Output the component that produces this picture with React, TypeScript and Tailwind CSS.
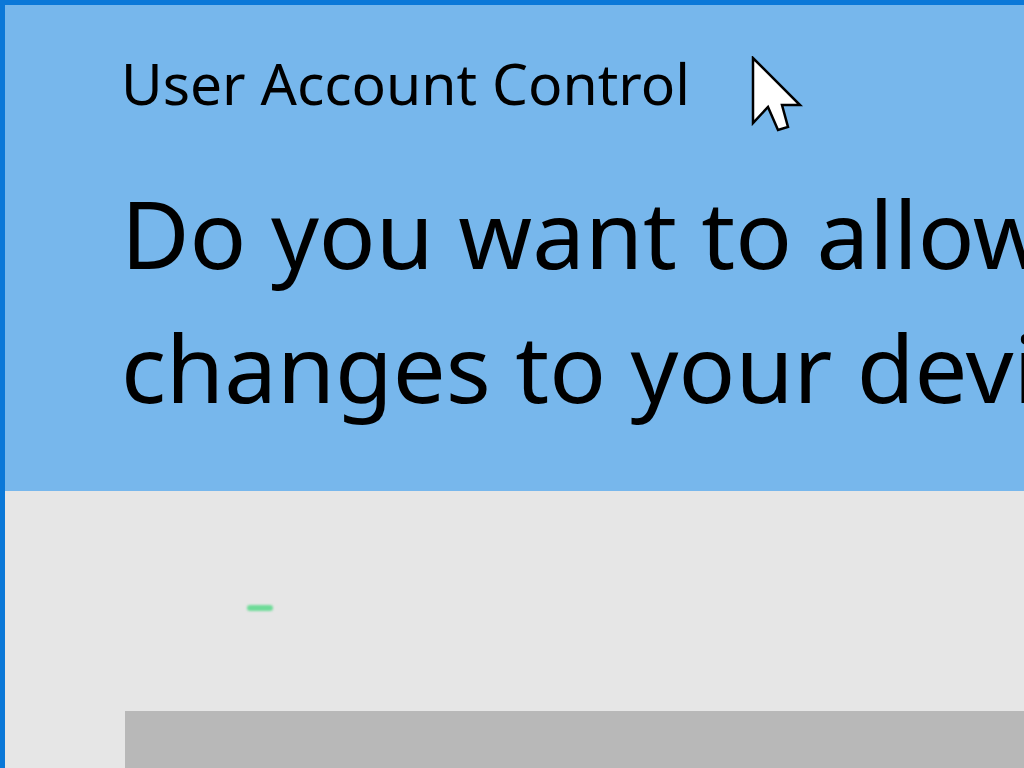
export default function App() {
  return (
    <div
      className="relative w-[1024px] h-[768px] overflow-hidden border-t-[5px] border-l-[5px] border-[#0b78d8] bg-[#e6e6e6]"
      style={{ fontFamily: '"Noto Sans", "Open Sans", sans-serif' }}
    >
      {/* Header */}
      <div className="h-[486px] bg-[#77b7ec] pl-[116px] pt-[40px] text-black overflow-hidden">
        <div className="text-[57px] leading-[76px] whitespace-nowrap">User Account Control</div>
        <div className="mt-[45px] text-[94px] leading-[134px] whitespace-nowrap">
          <div>Do you want to allow this app to make</div>
          <div>changes to your device?</div>
        </div>
      </div>

      {/* Body */}
      <div className="pl-[120px] pt-[114px]">
        <div className="ml-[122px] h-[6px] w-[26px] rounded-full bg-[#6edb98] blur-[1px]" />
        <div className="mt-[100px] h-[80px] bg-[#b8b8b8]" />
      </div>

      {/* Cursor */}
      <svg
        className="absolute left-[746px] top-[51px]"
        width="56"
        height="82"
        viewBox="0 0 56 82"
      >
        <path
          d="M2 2 L2 67 L17 51 L27 74 L37 71 L31 49 L49 49 Z"
          fill="#fff"
          stroke="#000"
          strokeWidth="2.5"
          strokeLinejoin="miter"
        />
      </svg>
    </div>
  );
}
